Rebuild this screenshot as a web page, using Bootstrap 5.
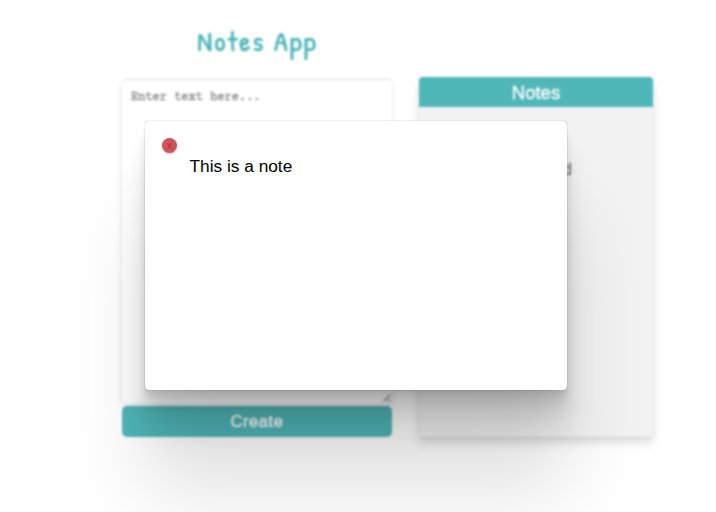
<!DOCTYPE html>
<html lang="en">
<head>
<meta charset="utf-8">
<meta name="viewport" content="width=device-width, initial-scale=1">
<title>Notes App</title>
<link href="https://cdn.jsdelivr.net/npm/bootstrap@5.3.0/dist/css/bootstrap.min.css" rel="stylesheet">
<style>
body { font-family: "Liberation Sans", Arial, sans-serif; height: 512px; background: #fff; }
.notes-app { filter: blur(.8px); padding: 22px 63px 0 122px; }
.app-title { width: 271px; margin-bottom: 17px; font: 400 28px/38px "Patrick Hand", Inter, sans-serif; letter-spacing: 2.1px; color: #50b7b9; -webkit-text-stroke: .7px #50b7b9; }
.editor { width: 270px; margin-top: 3px; }
.note-input { height: 323px; border: 0; border-radius: 4px; padding: 11px 9px; font: 400 12px/14px "Courier Prime", "Liberation Mono", "Courier New", monospace; resize: none; box-shadow: 0 2px 6px rgba(0,0,0,.1), 0 -1px 1px rgba(0,0,0,.14); }
.note-input::placeholder { color: #888; opacity: 1; -webkit-text-stroke: .4px #888; }
.create-btn { height: 31px; margin-top: 3px; border-radius: 5px; background: #50b7b9; color: #fff; font-size: 16.5px; font-weight: 400; line-height: 31px; letter-spacing: .6px; -webkit-text-stroke: .5px #fff; }
.grip { right: 0; bottom: 0; }
.notes-panel { width: 234px; height: 360px; margin-left: 27px; border-radius: 4px 4px 0 0; background: #f2f2f2; box-shadow: 0 1px 2px rgba(0,0,0,.08), 0 6px 10px rgba(0,0,0,.13); }
.notes-head { height: 30px; background: #50b7b9; border-radius: 4px 4px 0 0; font-size: 18.5px; line-height: 31px; -webkit-text-stroke: .4px #fff; }
.note-entry { padding: 54px 81px 0 0; font-size: 16px; line-height: 18px; color: #777; -webkit-text-stroke: .4px #777; }
.note-overlay { padding: 121px 149px 122px 145px; }
.note-dialog { border-radius: 4px; padding: 17px; box-shadow: 0 0 1px rgba(0,0,0,.5), 0 2.8px 2.2px rgba(0,0,0,.034), 0 6.7px 5.3px rgba(0,0,0,.048), 0 12.5px 10px rgba(0,0,0,.06), 0 22.3px 17.9px rgba(0,0,0,.072), 0 41.8px 33.4px rgba(0,0,0,.086), 0 100px 80px rgba(0,0,0,.12); }
.close-dot { width: 15px; height: 15px; background: #cd5559; color: #c9282e; font-size: 10px; line-height: 15px; box-shadow: 0 1px 3px rgba(0,0,0,.25); }
.note-text { margin: 2px 0 0 27.5px; font-size: 17.3px; line-height: 22px; color: #000; }
</style>
<script src="https://cdn.jsdelivr.net/npm/bootstrap@5.3.0/dist/js/bootstrap.bundle.min.js"></script>
</head>
<body class="position-relative overflow-hidden">
<main class="notes-app">
  <h1 class="app-title text-center text-nowrap">Notes App</h1>
  <div class="d-flex align-items-start">
    <section class="editor">
      <div class="position-relative">
        <textarea class="note-input d-block w-100" placeholder="Enter text here..."></textarea>
        <svg class="grip position-absolute" width="10" height="10" viewBox="0 0 10 10" fill="none" stroke="#888" stroke-width="1.2"><path d="M1.5 8.5l7-7M5.8 8.5l2.7-2.7"/></svg>
      </div>
      <button class="create-btn btn d-block w-100 p-0 border-0">Create</button>
    </section>
    <section class="notes-panel">
      <div class="notes-head text-center text-white">Notes</div>
      <div class="note-entry text-end">This is a second</div>
    </section>
  </div>
</main>
<div class="note-overlay position-absolute top-0 start-0 w-100 h-100">
  <div class="note-dialog bg-white h-100" role="dialog">
    <button class="close-dot d-block border-0 rounded-circle p-0 text-center">x</button>
    <p class="note-text">This is a note</p>
  </div>
</div>
</body>
</html>
